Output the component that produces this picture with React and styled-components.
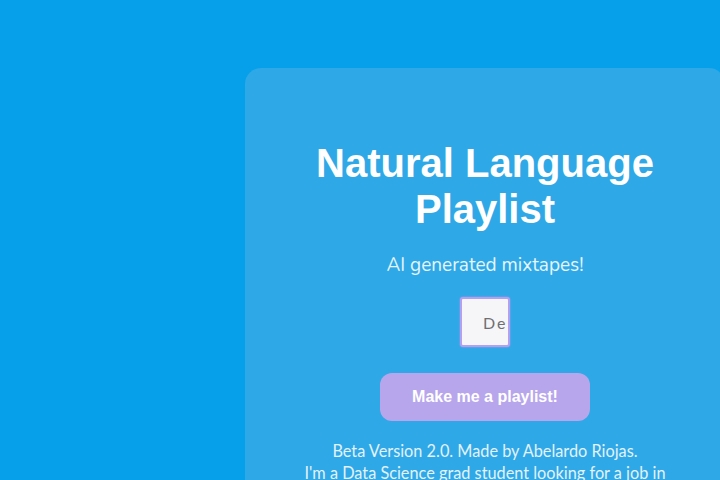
import React from "react";
import styled, { createGlobalStyle } from "styled-components";

const GlobalStyle = createGlobalStyle`
html, body {
    margin: 0;
    padding: 0;
    background: #06a0ea;
    overflow: hidden;
}
`

function App() {
    return (
        <Page>
            <GlobalStyle />
            <Card>
                <Title>Natural Language Playlist</Title>
                <Subtitle>AI generated mixtapes!</Subtitle>
                <PromptInput placeholder="Describe your playlist" />
                <MakeButton>Make me a playlist!</MakeButton>
                <Footer>
                    Beta Version 2.0. Made by Abelardo Riojas.
                    <br />
                    I'm a Data Science grad student looking for a job in
                </Footer>
            </Card>
        </Page>
    )
}

const Page = styled.div`
width: 720px;
height: 480px;
padding: 68px 0 0 245px;
box-sizing: border-box;
background: #06a0ea;
overflow: hidden;
`

const Card = styled.div`
width: 480px;
min-height: 500px;
box-sizing: border-box;
background: #2ea8e6;
border-radius: 16px;
padding-top: 72px;
display: flex;
flex-direction: column;
align-items: center;
`

const Title = styled.h1`
margin: 0;
width: 400px;
text-align: center;
font-family: "Liberation Sans", Arial, sans-serif;
font-weight: bold;
font-size: 40px;
line-height: 46px;
color: #ffffff;
`

const Subtitle = styled.p`
margin: 21px 0 0;
font-family: "Nunito", "Lato", sans-serif;
font-size: 19px;
line-height: 24px;
color: #e6f4fc;
`

const PromptInput = styled.input`
margin-top: 20px;
width: 50px;
height: 50px;
box-sizing: border-box;
padding: 0 0 0 21px;
background: #f6f6f9;
border: 2px solid #b4a0ef;
border-radius: 3px;
box-shadow: 0 0 2px #b4a0ef;
font-family: "Lato", sans-serif;
font-size: 16px;
letter-spacing: 2px;
outline: none;
&::placeholder {
    color: #6f6f73;
}
`

const MakeButton = styled.button`
margin-top: 26px;
width: 210px;
height: 48px;
background: #b7a6ec;
color: #ffffff;
border: none;
border-radius: 12px;
font-family: "Liberation Sans", Arial, sans-serif;
font-weight: bold;
font-size: 16px;
cursor: pointer;
`

const Footer = styled.p`
margin: 19px 0 0;
text-align: center;
font-family: "Lato", sans-serif;
font-size: 16.3px;
line-height: 22px;
color: #e3f2fb;
white-space: nowrap;
`

export default App;
